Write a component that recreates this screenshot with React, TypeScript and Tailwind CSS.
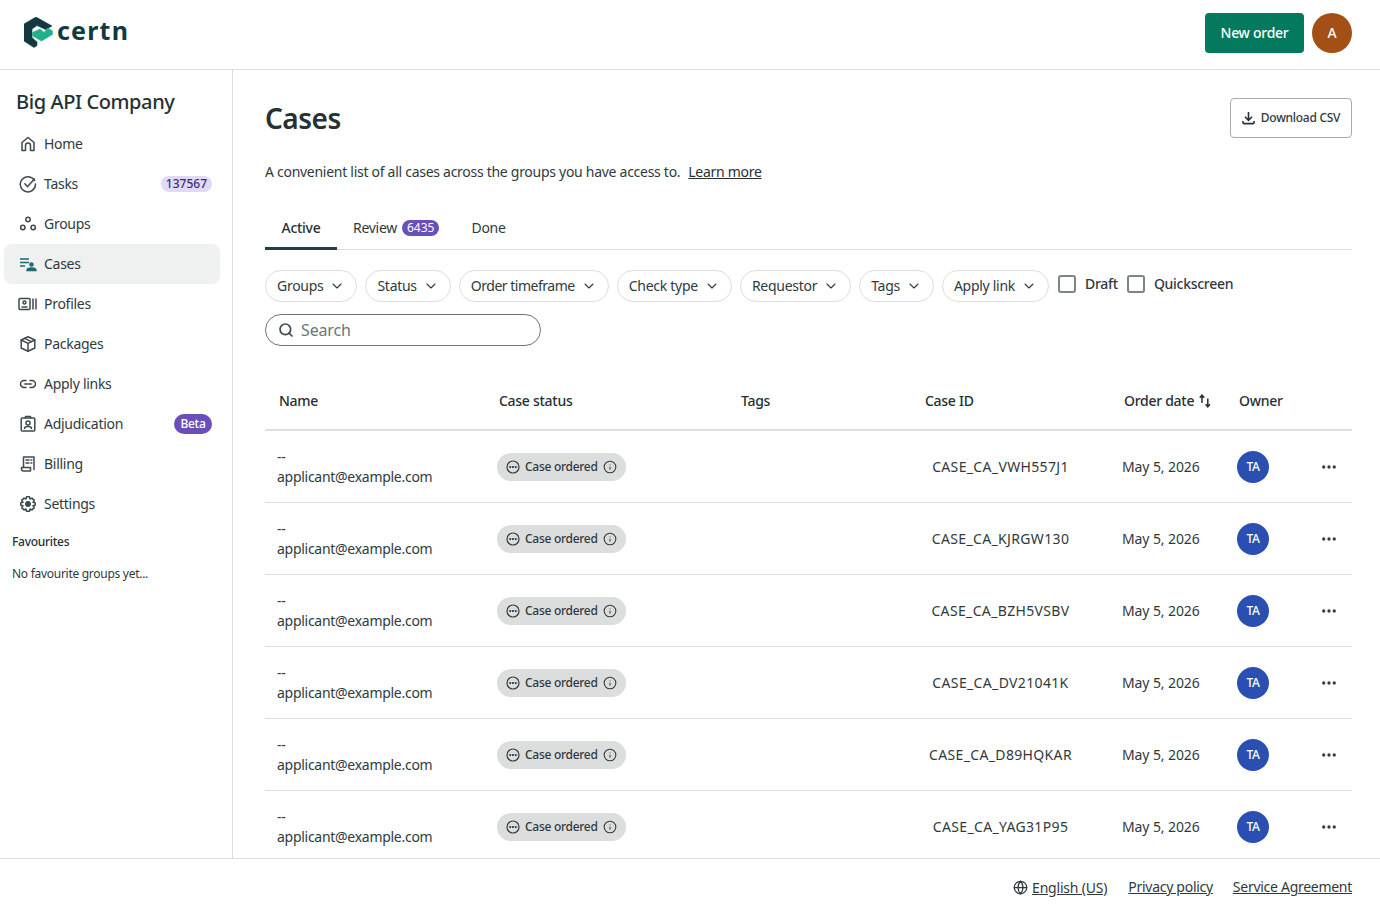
import { ChevronDown, Search, Globe, Ellipsis, Info } from "lucide-react";

const CertnLogo = () => (
  <div className="flex items-center gap-1">
    <svg width="29" height="31" viewBox="0 0 29 31" className="shrink-0">
      <path d="M12 0 L28 9 L21.5 12.5 L13 8.5 L8 12 L8 20.5 L13 25 L13 28.5 L10 30.5 L0 24 L0 7 Z" fill="#12393f" stroke="#12393f" strokeWidth="0.6" strokeLinejoin="round" />
      <path d="M8.5 15.5 L16 12 L20 15.5 L24 11 L28.5 14 L28.5 17.5 L17.5 24 L8.7 19 Z" fill="#20b08c" stroke="#20b08c" strokeWidth="0.6" strokeLinejoin="round" />
    </svg>
    <span className="font-bold text-[25px] leading-none tracking-[1.2px] text-[#12393f] mb-[5px]">certn</span>
  </div>
);

const Ico = ({ children }: { children: React.ReactNode }) => (
  <svg width="18" height="18" viewBox="0 0 18 18" fill="none" stroke="#3f4a4d" strokeWidth="1.5" strokeLinecap="round" strokeLinejoin="round" className="shrink-0">
    {children}
  </svg>
);

const navItems = [
  {
    label: "Home",
    icon: <Ico><path d="M3 15.5V7.5L9 2.5L15 7.5V15.5H11.5V10.5C11.5 9 10.5 8 9 8C7.5 8 6.5 9 6.5 10.5V15.5Z" /></Ico>,
  },
  {
    label: "Tasks",
    badge: "137567",
    icon: <Ico><path d="M15.5 5.5A7.6 7.6 0 1 0 16.5 9" /><path d="M5.8 8.8L8.6 11.6L15.5 4" /></Ico>,
  },
  {
    label: "Groups",
    icon: <Ico><circle cx="9" cy="4.5" r="2.2" /><circle cx="3.8" cy="12.5" r="2.2" /><circle cx="14.2" cy="12.5" r="2.2" /></Ico>,
  },
  {
    label: "Cases",
    active: true,
    icon: (
      <svg width="18" height="18" viewBox="0 0 18 18" fill="none" stroke="#1d6a72" strokeWidth="1.4" className="shrink-0">
        <path d="M1 4H10M1 7.5H10M1 11H6" />
        <circle cx="12.5" cy="9.5" r="1.6" fill="#1d6a72" />
        <path d="M8 15.5C8 13.5 10 13 12.5 13C15 13 17 13.5 17 15.5Z" fill="#1d6a72" />
      </svg>
    ),
  },
  {
    label: "Profiles",
    icon: (
      <svg width="20" height="18" viewBox="0 0 20 18" fill="none" stroke="#3f4a4d" strokeWidth="1.5" className="shrink-0 -ml-[1px] -mr-[1px]">
        <rect x="1" y="3.5" width="11" height="11" rx="1" />
        <circle cx="6.5" cy="7.5" r="1.5" />
        <path d="M3.5 12H9.5" />
        <path d="M15 3.5V14.5M18 3.5V14.5" />
      </svg>
    ),
  },
  {
    label: "Packages",
    icon: <Ico><path d="M9 1.8L15.8 5V13L9 16.2L2.2 13V5Z" /><path d="M2.2 5L9 8.4L15.8 5M9 8.4V16.2M5.5 3.4L12.3 6.7" /></Ico>,
  },
  {
    label: "Apply links",
    icon: <Ico><path d="M7 5.5H5A3.5 3.5 0 0 0 5 12.5H7M11 5.5H13A3.5 3.5 0 0 1 13 12.5H11M5.8 9H12.2" /></Ico>,
  },
  {
    label: "Adjudication",
    badge: "Beta",
    badgeDark: true,
    icon: <Ico><rect x="2.2" y="3" width="13.6" height="13" rx="1" /><path d="M6.5 3V1.5H11.5V3" /><circle cx="9" cy="8" r="2" /><path d="M5.5 13.5C5.5 12 7 11.5 9 11.5C11 11.5 12.5 12 12.5 13.5" /></Ico>,
  },
  {
    label: "Billing",
    icon: <Ico><path d="M4.5 12.5V2H15V14.5" /><path d="M2.5 12.5H11.5V16H4.5C3.3 16 2.5 15.2 2.5 14Z" /><path d="M7 5H10M7 8H10M12 5H12.8M12 8H12.8" /></Ico>,
  },
  {
    label: "Settings",
    icon: <Ico><path d="M7.5 1.8H10.5L11 4L13 3.1L15.3 5.4L14 7.2L16.2 7.8V10.2L14 10.8L15.3 12.6L13 14.9L11 14L10.5 16.2H7.5L7 14L5 14.9L2.7 12.6L4 10.8L1.8 10.2V7.8L4 7.2L2.7 5.4L5 3.1L7 4Z" /><circle cx="9" cy="9" r="2.2" fill="#3f4a4d" /></Ico>,
  },
];

const filters = ["Groups", "Status", "Order timeframe", "Check type", "Requestor", "Tags", "Apply link"];

const rows = ["CASE_CA_VWH557J1", "CASE_CA_KJRGW130", "CASE_CA_BZH5VSBV", "CASE_CA_DV21041K", "CASE_CA_D89HQKAR", "CASE_CA_YAG31P95"];

const gridCols = "grid grid-cols-[220px_242px_184px_199px_115px_80px_47px]";

export default function App() {
  return (
    <div className="h-[911px] flex flex-col bg-white text-[#2f3a3d] font-['Noto_Sans',sans-serif] text-sm tracking-[-0.28px] overflow-hidden">
      {/* Header */}
      <header className="h-[70px] shrink-0 border-b border-[#dcdddd] flex items-center justify-between pl-6 pr-7 pb-1">
        <CertnLogo />
        <div className="flex items-center gap-2">
          <button className="w-[99px] h-10 rounded bg-[#03795d] text-white font-medium">New order</button>
          <div className="w-10 h-10 rounded-full bg-[#a44f16] text-white flex items-center justify-center font-medium">A</div>
        </div>
      </header>

      <div className="flex flex-1 min-h-0">
        {/* Sidebar */}
        <aside className="w-[233px] shrink-0 border-r border-[#dcdddd] pl-1 pr-3 pt-5">
          <h2 className="pl-3 text-[20px] leading-6 font-medium tracking-[-0.4px] text-[#263134] mb-[10px]">Big API Company</h2>
          <nav>
            {navItems.map((item) => (
              <div key={item.label} className={`h-10 flex items-center gap-[7px] pl-[15px] pr-2 rounded-lg ${item.active ? "bg-[#eff0f0]" : ""}`}>
                {item.icon}
                <span className="flex-1">{item.label}</span>
                {item.badge && (
                  <span className={`rounded-full text-xs font-medium ${item.badgeDark ? "bg-[#6b4fb8] text-white h-5 leading-5 px-[6.5px]" : "bg-[#e0d9f7] text-[#3c3170] h-4 leading-4 px-[5px] tracking-normal"}`}>
                    {item.badge}
                  </span>
                )}
              </div>
            ))}
          </nav>
          <p className="pl-2 mt-[10px] text-xs leading-4 font-medium text-[#263134]">Favourites</p>
          <p className="pl-2 mt-4 text-xs leading-4">No favourite groups yet...</p>
        </aside>

        {/* Main */}
        <main className="flex-1 min-w-0 pl-8 pr-7 overflow-hidden">
          <div className="flex items-start justify-between pt-7">
            <h1 className="text-[28px] leading-9 font-semibold tracking-[-0.5px] text-[#263134] mt-[2px]">Cases</h1>
            <button className="w-[122px] h-10 rounded border border-[#a8abac] flex items-center justify-center gap-1.5 text-xs font-medium">
              <svg width="13" height="14" viewBox="0 0 13 14" fill="none" stroke="#263134" strokeWidth="1.6" className="shrink-0">
                <path d="M6.5 1V9M3 5.8L6.5 9.3L10 5.8" />
                <path d="M1 10V11.5C1 12.2 1.5 12.6 2 12.6H11C11.5 12.6 12 12.2 12 11.5V10" />
              </svg>
              Download CSV
            </button>
          </div>
          <p className="mt-6 leading-5">
            A convenient list of all cases across the groups you have access to.
            <a className="ml-2 underline text-[#263134]">Learn more</a>
          </p>

          {/* Tabs */}
          <div className="mt-[26px] h-[42px] border-b border-[#dcdddd] flex">
            <div className="w-[72px] h-[42px] border-b-[3px] border-[#263d40] flex items-center justify-center font-medium text-[#263134]">Active</div>
            <div className="pl-4 pr-4 pb-[2px] flex items-center gap-[5px]">
              Review
              <span className="h-4 leading-4 rounded-full bg-[#6b4fb8] text-white text-xs px-[5px] tracking-normal">6435</span>
            </div>
            <div className="px-4 pb-[2px] flex items-center">Done</div>
          </div>

          {/* Filters */}
          <div className="mt-5 flex items-start gap-2">
            {filters.map((f) => (
              <button key={f} className={`h-8 px-[11px] rounded-full border border-[#dcdddd] flex items-center gap-1.5 ${f === "Order timeframe" ? "tracking-[-0.48px]" : ""}`}>
                {f}
                <ChevronDown size={16} strokeWidth={1.6} />
              </button>
            ))}
            <label className="flex items-center gap-[9px] ml-px h-7">
              <span className="w-[18px] h-[18px] rounded-[3px] border-2 border-[#7d8486]" />
              <span className="font-medium">Draft</span>
            </label>
            <label className="flex items-center gap-[9px] ml-px h-7">
              <span className="w-[18px] h-[18px] rounded-[3px] border-2 border-[#7d8486]" />
              <span className="font-medium">Quickscreen</span>
            </label>
          </div>

          {/* Search */}
          <div className="mt-3 w-[276px] h-8 rounded-full border border-[#6d7577] flex items-center gap-[7px] pl-3">
            <Search size={16} strokeWidth={2.5} className="text-[#3f4a4d]" />
            <span className="text-base text-[#6d7577] tracking-[-0.15px]">Search</span>
          </div>

          {/* Table */}
          <div className={`${gridCols} mt-[27px] h-[58px] items-center border-b-2 border-[#dcdddd] font-medium text-[#263134]`}>
            <div className="pl-[14px]">Name</div>
            <div className="pl-[14px]">Case status</div>
            <div className="pl-[14px]">Tags</div>
            <div className="pl-[14px]">Case ID</div>
            <div className="pl-[14px] flex items-center gap-[5px]">
              Order date
              <svg width="12" height="14" viewBox="0 0 12 14" fill="none" stroke="#263134" strokeWidth="1.5" className="shrink-0">
                <path d="M3 9V1.5M0.8 3.8L3 1.2L5.2 3.8" />
                <path d="M8.8 4.5V12.5M6.6 10.2L8.8 12.8L11 10.2" />
              </svg>
            </div>
            <div className="pl-[14px]">Owner</div>
            <div />
          </div>
          {rows.map((id) => (
            <div key={id} className={`${gridCols} h-[72px] items-center border-b border-[#dcdddd]`}>
              <div className="pl-3 leading-5">
                <div>--</div>
                <div>applicant@example.com</div>
              </div>
              <div className="pl-3">
                <span className="inline-flex items-center gap-[5px] h-7 px-[9px] rounded-full bg-[#dcdddd] text-xs font-medium">
                  <svg width="14" height="14" viewBox="0 0 14 14" fill="none" stroke="#2f3a3d" strokeWidth="1.2" className="shrink-0">
                    <circle cx="7" cy="7" r="6" />
                    <circle cx="4.2" cy="7" r="0.5" fill="#2f3a3d" />
                    <circle cx="7" cy="7" r="0.5" fill="#2f3a3d" />
                    <circle cx="9.8" cy="7" r="0.5" fill="#2f3a3d" />
                  </svg>
                  Case ordered
                  <Info size={14} strokeWidth={1.8} />
                </span>
              </div>
              <div />
              <div className="pl-3 pr-8 text-center whitespace-nowrap tracking-[0.35px]">{id}</div>
              <div className="pl-3 whitespace-nowrap tracking-[-0.1px]">May 5, 2026</div>
              <div className="pl-3">
                <div className="w-8 h-8 rounded-full bg-[#2a4fb0] text-white text-xs flex items-center justify-center font-medium">TA</div>
              </div>
              <div className="flex justify-center">
                <Ellipsis size={18} strokeWidth={2.4} />
              </div>
            </div>
          ))}
        </main>
      </div>

      {/* Footer */}
      <footer className="h-[53px] shrink-0 border-t border-[#dcdddd] flex items-center justify-end gap-5 pr-7 pt-1">
        <span className="flex items-center gap-1">
          <Globe size={15} strokeWidth={2} />
          <a className="underline mt-[2px] mr-px tracking-[-0.2px]">English (US)</a>
        </span>
        <a className="underline">Privacy policy</a>
        <a className="underline">Service Agreement</a>
      </footer>
    </div>
  );
}
